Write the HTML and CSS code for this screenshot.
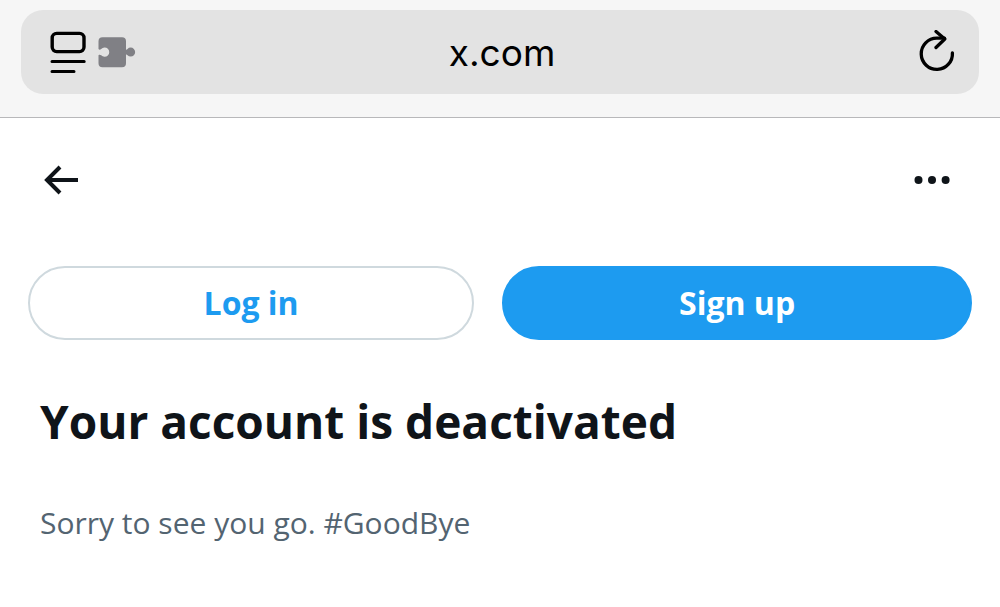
FILE: index.html
```
<!DOCTYPE html>
<html lang="en">
<head>
  <meta charset="UTF-8" />
  <meta name="viewport" content="width=device-width, initial-scale=1" />
  <title>Your account is deactivated</title>
  <link rel="stylesheet" href="styles.css">
</head>
<body>

<header class="browser">
  <div class="address-bar">
    <button class="icon-button" aria-label="Page menu">
      <svg width="88" height="44" viewBox="0 0 88 44" fill="none">
        <rect x="3.2" y="3.4" width="31.8" height="18.2" rx="4.5" stroke="#000" stroke-width="3.4" />
        <path d="M3 31.6H35.2M3 41.6H25" stroke="#000" stroke-width="3" stroke-linecap="round" />
        <path fill="#808085" d="M53.500 7.300H73a4 4 0 0 1 4 4V19.600C77.400 20.300 78 19.400 78.500 18.900A4.500 4.500 0 1 1 78.500 25.300C78 24.800 77.400 24 77 24.700V33.200a4 4 0 0 1-4 4H53.500a4 4 0 0 1-4-4V25.200C50.300 24.400 51.300 24.600 52.200 25.200A4.600 4.600 0 1 0 52.200 19.100C51.300 19.700 50.300 19.900 49.500 19.100V11.300a4 4 0 0 1 4-4z" />
      </svg>
    </button>
    <input class="address" type="text" value="x.com" aria-label="Address" />
    <button class="icon-button reload" aria-label="Reload">
      <svg width="38" height="44" viewBox="0 0 38 44" fill="none" stroke="#000" stroke-width="3.3" stroke-linecap="round" stroke-linejoin="round">
        <path d="M35.4 22.8A15.6 15.6 0 1 1 19.8 8.2H27.500" />
        <path d="M19 1.500L27.800 9L19 17.500" />
      </svg>
    </button>
  </div>
</header>

<nav class="topbar">
  <button class="icon-button" aria-label="Back">
    <svg width="36" height="30" viewBox="0 0 36 30" fill="none" stroke="#0f1419" stroke-width="4">
      <path d="M16 2L3 15L16 28M3 15H34" />
    </svg>
  </button>
  <button class="icon-button" aria-label="More">
    <svg width="36" height="30" viewBox="0 0 36 30" fill="#0f1419">
      <circle cx="4.500" cy="15" r="4" />
      <circle cx="18" cy="15" r="4" />
      <circle cx="31.600" cy="15" r="4" />
    </svg>
  </button>
</nav>

<div class="actions">
  <a class="pill login" href="#login">Log in</a>
  <a class="pill signup" href="#signup">Sign up</a>
</div>

<main class="message">
  <h1>Your account is deactivated</h1>
  <p>Sorry to see you go. #GoodBye</p>
</main>

</body>
</html>
```
FILE: styles.css
```
* { box-sizing: border-box; }
body {
  margin: 0;
  background: #fff;
  color: #0f1419;
  font-family: "Open Sans", "Noto Sans", sans-serif;
}
.icon-button {
  display: flex; padding: 0;
  background: none; border: none; cursor: pointer;
}
.browser {
  padding: 10px 21px 23px;
  background: #f6f6f6;
  border-bottom: 1px solid #b8b8ba;
}
.address-bar {
  display: grid; grid-template-columns: 1fr auto 1fr;
  align-items: center;
  height: 84px; padding: 0 24px 0 28px;
  background: #e3e3e3; border-radius: 22px;
}
.address {
  width: 240px; padding: 0;
  border: none; background: none; color: #000;
  font-family: Inter, sans-serif;
  font-size: 37px; text-align: center;
}
.reload { justify-self: end; }
.topbar {
  display: flex; justify-content: space-between;
  padding: 47px 50px 71px 44px;
}
.actions {
  display: flex; gap: 28px;
  padding: 0 28px;
}
.pill {
  padding: 16px 20px;
  border: 2px solid #cfd9de; border-radius: 40px;
  font-size: 32px; font-weight: 700; line-height: 38px;
  text-align: center; text-decoration: none;
}
.login { flex: 17; color: #1d9bf0; }
.signup {
  flex: 18;
  background: #1d9bf0; border-color: #1d9bf0;
  color: #fff;
}
.message { padding: 49px 40px; }
.message h1 {
  margin: 0;
  font-size: 46px; font-weight: 700; line-height: 64px;
}
.message p {
  margin: 50px 0 0;
  color: #536471;
  font-size: 30px; line-height: 40px;
}
```
